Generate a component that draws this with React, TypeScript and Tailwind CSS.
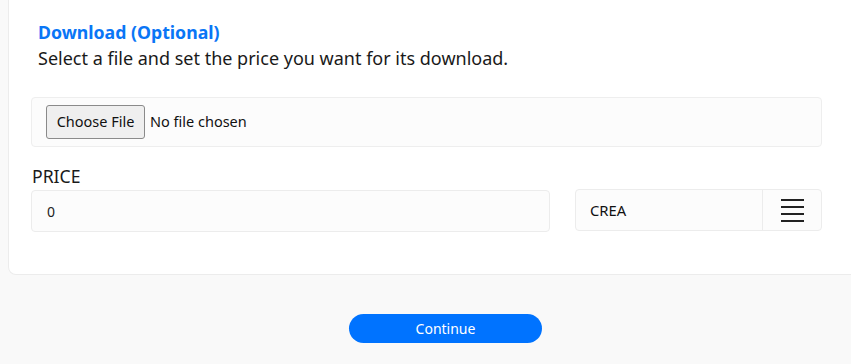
import React from "react";

export default function App() {
  return (
    <div
      className="w-[851px] h-[364px] overflow-hidden bg-[#f9f9f9] text-[#222]"
      style={{ fontFamily: '"Noto Sans", "Open Sans", sans-serif' }}
    >
      <div className="ml-[8px] w-[875px] bg-white border border-t-0 border-[#ececec] rounded-b-[8px] pl-[22px] pt-[19px] pb-[42px]">
        <div className="pl-[7px]">
          <div className="text-[17.7px] leading-[26px] font-bold text-[#0a76f6]">Download (Optional)</div>
          <div className="text-[18px] leading-[26px] text-[#1a1a1a]">
            Select a file and set the price you want for its download.
          </div>
        </div>
        <div className="mt-[26px] w-[791px] h-[50px] bg-[#fcfcfc] border border-[#eeeeee] rounded-[4px] flex items-center pl-[14px]">
          <button className="h-[34px] w-[99px] bg-[#efefef] border border-[#8a8a8a] rounded-[3px] text-[14.5px] text-[#111] flex items-center justify-center">
            Choose File
          </button>
          <span className="ml-[5px] text-[14.5px] text-[#111]">No file chosen</span>
        </div>
        <div className="mt-[18px] text-[17.6px] leading-[22px] pl-[1px] text-[#1a1a1a]">PRICE</div>
        <div className="mt-[3px] flex w-[791px] items-start">
          <div className="w-[519px] h-[42px] bg-[#fcfcfc] border border-[#ececec] rounded-[4px] flex items-center pl-[15px] text-[14px] text-[#222]">
            0
          </div>
          <div className="ml-[25px] -mt-[1px] w-[247px] h-[42px] bg-[#fcfcfc] border border-[#ececec] rounded-[4px] flex">
            <div className="w-[186px] flex items-center pl-[14px] text-[14.8px] text-[#111]">CREA</div>
            <div className="flex-1 border-l border-[#ececec] flex items-center justify-center pl-[1px]">
              <svg width="23" height="23" viewBox="0 0 23 23">
                <rect x="0" y="0" width="23" height="2" fill="#222" />
                <rect x="0" y="7" width="23" height="2" fill="#222" />
                <rect x="0" y="14" width="23" height="2" fill="#222" />
                <rect x="0" y="21" width="23" height="2" fill="#222" />
              </svg>
            </div>
          </div>
        </div>
      </div>
      <div className="mt-[39px] pl-[349px]">
        <button className="w-[193px] h-[29px] rounded-full bg-[#0073ff] text-white text-[14px] flex items-center justify-center">
          Continue
        </button>
      </div>
    </div>
  );
}
